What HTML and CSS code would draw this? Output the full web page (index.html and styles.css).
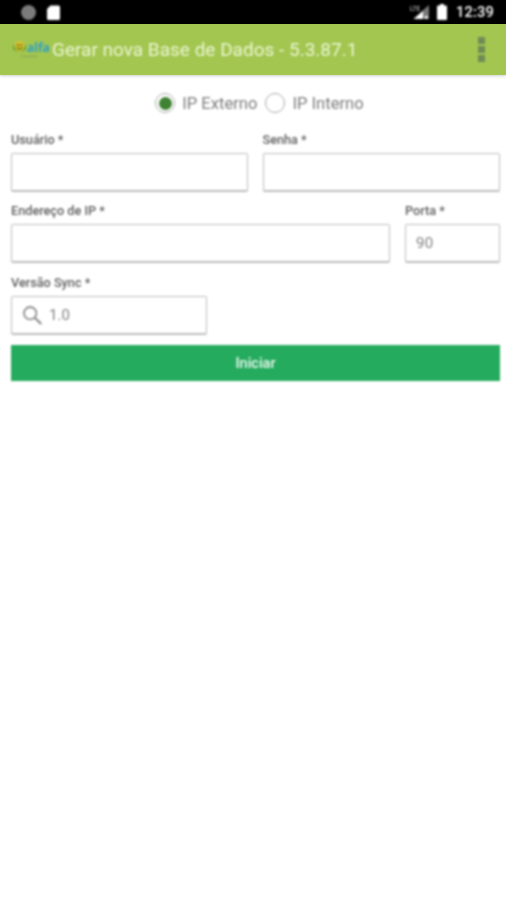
FILE: index.html
```html
<!DOCTYPE html>
<html lang="pt">
<head>
<meta charset="utf-8">
<title>Gerar nova Base de Dados</title>
<link rel="stylesheet" href="styles.css">
</head>
<body>
<div class="screen">
  <header class="status">
    <div class="status-left soft">
      <span class="dot"></span>
      <svg class="sd" width="13" height="15" viewBox="0 0 13 15"><path d="M3.5 0.5H11.5Q13 0.5 13 2V13.5Q13 15 11.5 15H1.5Q0 15 0 13.5V4Z" fill="#fff"/></svg>
    </div>
    <div class="status-right soft">
      <svg class="signal" width="20" height="16" viewBox="0 0 20 16"><path d="M19 1V15H3Z" fill="#777"/><path d="M13 7V15H4Z" fill="#fff"/><rect x="15" y="12" width="2.5" height="3" fill="#fff"/><text x="0" y="6.5" class="lte">LTE</text></svg>
      <svg class="battery" width="10" height="16" viewBox="0 0 10 16"><path d="M3 0H7V1.5H9Q10 1.5 10 2.5V15Q10 16 9 16H1Q0 16 0 15V2.5Q0 1.5 1 1.5H3Z" fill="#fff"/></svg>
      <span class="clock">12:39</span>
    </div>
  </header>
  <div class="appbar">
    <svg class="logo soft" width="37" height="20" viewBox="0 0 37 20">
      <ellipse cx="6.5" cy="7.5" rx="6.5" ry="4" fill="#3f9a3e"/>
      <circle cx="6.5" cy="6.5" r="5" fill="#e6c52b"/>
      <circle cx="4.8" cy="5" r="1" fill="#2f5a20"/><circle cx="8.2" cy="5" r="1" fill="#2f5a20"/>
      <path d="M3.8 7.5Q6.5 10.5 9.2 7.5" stroke="#2f6a20" stroke-width="1.2" fill="none"/>
      <path d="M8 16.5H24" stroke="#7fa558" stroke-width="1"/>
      <text x="14" y="12" class="logo-text">alfa</text>
    </svg>
    <h1 class="title soft">Gerar nova Base de Dados - 5.3.87.1</h1>
    <div class="menu soft"><span></span><span></span><span></span></div>
  </div>
  <main class="form soft">
    <div class="radios">
      <span class="radio radio-on"><span class="radio-dot"></span></span><span class="radio-label">IP Externo</span>
      <span class="radio"></span><span class="radio-label">IP Interno</span>
    </div>
    <div class="row row-first">
      <div class="field grow"><label class="label">Usuário *</label><div class="input"></div></div>
      <div class="field grow second"><label class="label">Senha *</label><div class="input"></div></div>
    </div>
    <div class="row">
      <div class="field ip"><label class="label">Endereço de IP *</label><div class="input"></div></div>
      <div class="field port"><label class="label">Porta *</label><div class="input"><span class="value">90</span></div></div>
    </div>
    <div class="row row-last">
      <div class="field sync"><label class="label">Versão Sync *</label>
        <div class="input">
          <svg class="search" width="20" height="20" viewBox="0 0 20 20"><circle cx="8.2" cy="8.2" r="6.2" fill="none" stroke="#8f8f8f" stroke-width="1.8"/><path d="M12.8 12.8L18.6 18.4" stroke="#8f8f8f" stroke-width="2.2" stroke-linecap="round"/></svg>
          <span class="value">1.0</span>
        </div>
      </div>
    </div>
    <button class="start">Iniciar</button>
  </main>
</div>
</body>
</html>
```

FILE: styles.css
```css
* { box-sizing: border-box; }
html, body { margin: 0; padding: 0; background: #fff; }
body { font-family: Roboto, "Liberation Sans", sans-serif; }
.screen { width: 506px; height: 900px; overflow: hidden; background: #fff; }
.soft { filter: blur(0.8px); }

.status { height: 24px; background: #000; display: flex; justify-content: space-between; align-items: center; }
.status-left { display: flex; align-items: center; padding-left: 21px; gap: 11px; }
.dot { width: 15px; height: 15px; border-radius: 50%; background: #7b7b7b; }
.sd { display: block; }
.status-right { display: flex; align-items: center; padding-right: 12px; }
.signal { display: block; margin-right: 7px; }
.lte { font-size: 6.5px; fill: #ddd; font-family: Roboto, sans-serif; }
.battery { display: block; margin-right: 9px; }
.clock { color: #fff; font-size: 14.6px; font-weight: 500; line-height: 24px; letter-spacing: 0.2px; }

.appbar { height: 51px; background: #a3c651; display: flex; align-items: center; padding-left: 13px; box-shadow: 0 1px 3px rgba(0,0,0,.2); }
.logo { display: block; flex: none; }
.logo-text { font-size: 12px; font-weight: 700; fill: #2f9fc4; font-family: "Open Sans", sans-serif; }
.title { margin: 0 0 0 2px; font-size: 19px; font-weight: 400; color: #eaf6d2; white-space: nowrap; flex: 1; }
.menu { display: flex; flex-direction: column; gap: 2px; margin-right: 21px; }
.menu span { width: 7px; height: 7px; background: #6f8b55; }

.form { padding: 16px 6px 0 11px; }
.radios { display: flex; align-items: center; justify-content: center; height: 24px; margin-left: 8px; }
.radio { width: 20px; height: 20px; border-radius: 50%; border: 1px solid #a8a8a8; display: flex; align-items: center; justify-content: center; }
.radio-dot { width: 13px; height: 13px; border-radius: 50%; background: #3f8232; }
.radio-label { font-size: 16.6px; color: #7c7c7c; margin-left: 7px; margin-right: 8px; }
.radio-label:last-child { margin-right: 0; }

.row { display: flex; }
.row-first { margin-top: 18px; }
.row + .row { margin-top: 12px; }
.row + .row-last { margin-top: 13px; }
.field { display: flex; flex-direction: column; }
.grow { width: 237px; }
.second { margin-left: 15px; width: 238px; }
.ip { width: 379px; }
.port { width: 95px; margin-left: 15px; }
.sync { width: 196px; }
.label { font-size: 12.7px; font-weight: 500; color: #5e5e5e; line-height: 14px; margin-bottom: 6px; }
.input { height: 39px; border: 1px solid #bdbdbd; border-bottom-width: 2px; border-radius: 2px; background: #fff; display: flex; align-items: center; padding-left: 10px; }
.value { font-size: 15px; color: #808080; }
.port .value { letter-spacing: 0.2px; }
.search { display: block; margin-right: 7px; }

.start { display: block; width: 489px; height: 36px; margin-top: 10px; border: 0; border-radius: 0; background: #25ab5e; color: #eef9f1; font-family: Roboto, sans-serif; font-size: 14.5px; font-weight: 500; padding: 0; }
```
